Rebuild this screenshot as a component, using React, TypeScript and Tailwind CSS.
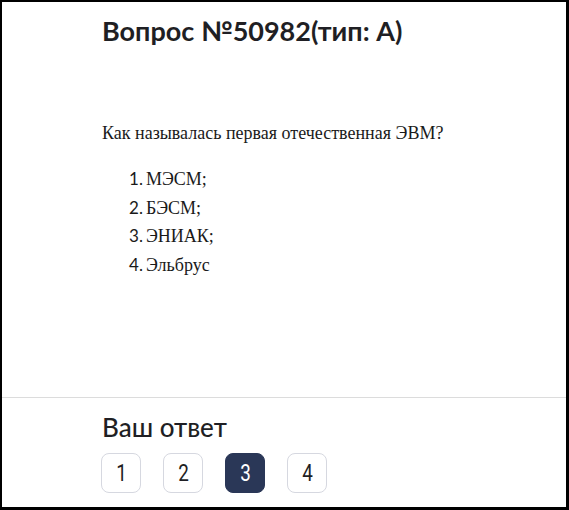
import React from "react";

export default function App() {
  const options = ["МЭСМ;", "БЭСМ;", "ЭНИАК;", "Эльбрус"];
  const answers = [1, 2, 3, 4];
  const selected = 3;
  return (
    <div className="w-[569px] h-[510px] bg-white border-black border-l-2 border-t-2 border-r-[3px] border-b-[3px] flex flex-col">
      <div className="flex-1 pl-[100px] pt-[13px]">
        <h1 className="text-[27px] leading-[32px] font-bold text-[#1f1f24] font-['Lato',sans-serif]">
          Вопрос №50982(тип: А)
        </h1>
        <p className="mt-[76px] text-[18px] leading-[20px] text-[#1a1a1a] font-['Liberation_Serif',serif]">
          Как называлась первая отечественная ЭВМ?
        </p>
        <ol className="mt-[22px] pl-[27px]">
          {options.map((o, i) => (
            <li key={o} className="flex items-baseline text-[18px] leading-[27.5px] text-[#1a1a1a]">
              <span className="mr-[3px] text-[17px] font-['Lato',sans-serif]">{i + 1}.</span>
              <span className="font-['Liberation_Serif',serif]">{o}</span>
            </li>
          ))}
        </ol>
      </div>
      <div className="border-t border-[#dcdcdc] pl-[100px] pt-[13px] pb-[14px]">
        <h2 className="text-[26px] leading-[32px] font-medium text-[#1f1f24] font-['Lato',sans-serif]">
          Ваш ответ
        </h2>
        <div className="mt-[10px] -ml-px flex gap-[22px]">
          {answers.map((n) => (
            <div
              key={n}
              className={
                n === selected
                  ? "w-10 h-10 rounded-lg bg-[#2a3757] border border-[#2a3757] text-white flex items-center justify-center"
                  : "w-10 h-10 rounded-lg bg-white border border-[#d6d8e0] text-[#1f1f24] flex items-center justify-center"
              }
            >
              <span className="inline-block scale-x-[0.82] text-[23px] leading-none font-['Roboto',sans-serif]">
                {n}
              </span>
            </div>
          ))}
        </div>
      </div>
    </div>
  );
}
